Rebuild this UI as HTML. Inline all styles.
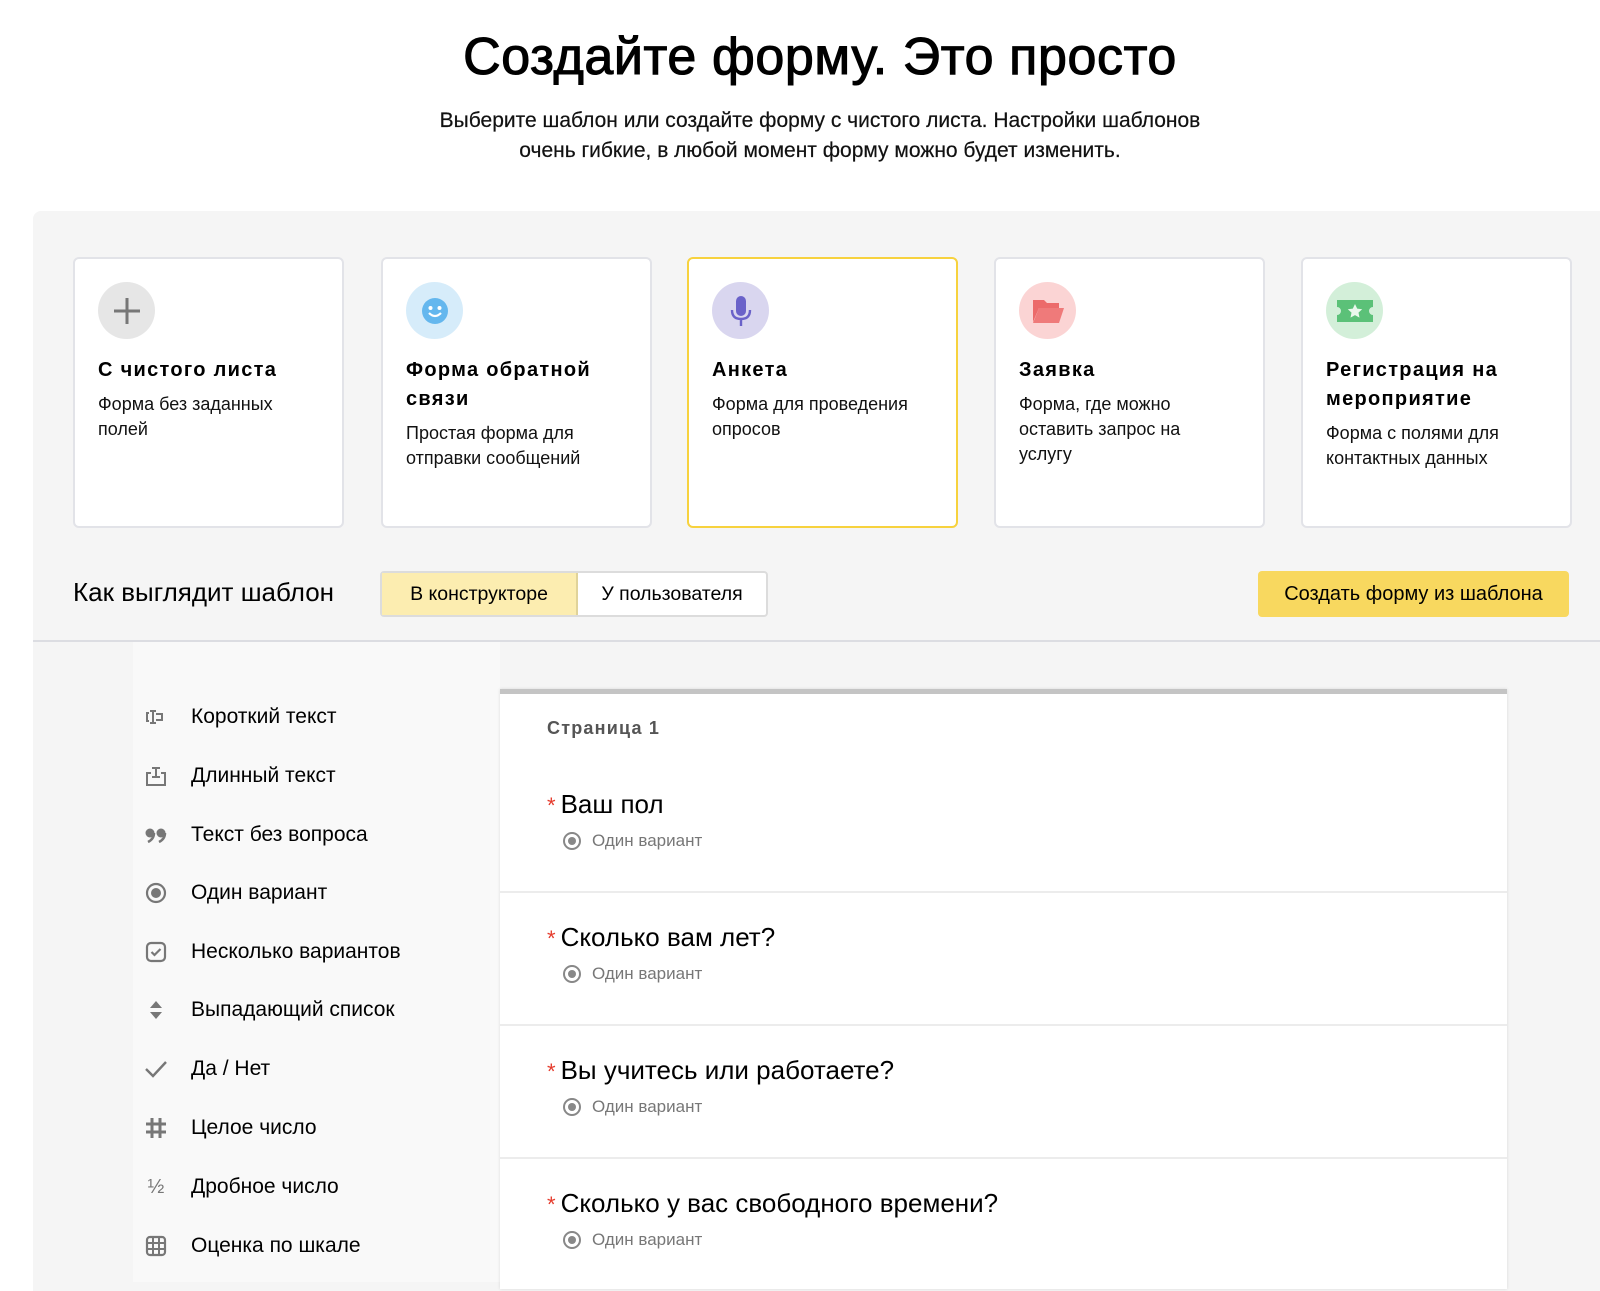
<!DOCTYPE html>
<html><head><meta charset="utf-8">
<style>
*{box-sizing:border-box;margin:0;padding:0}
body{width:1600px;height:1279px;overflow:hidden;background:#fff;font-family:"Liberation Sans","Noto Sans CJK SC",sans-serif;color:#000;position:relative}
h1{position:absolute;left:20px;width:1600px;top:27px;text-align:center;font-size:52px;font-weight:normal;letter-spacing:0.6px;-webkit-text-stroke:1.1px #000}
.sub{position:absolute;left:20px;width:1600px;top:106px;text-align:center;font-size:21px;line-height:30px;color:#111;-webkit-text-stroke:0.2px #111}
.panel{position:absolute;left:33px;top:211px;width:1580px;height:1080px;background:#f5f5f5;border-radius:8px 0 0 0}
.card{position:absolute;top:257px;width:271px;height:271px;background:#fff;border:2px solid #e2e3e8;border-radius:6px;padding:0 22px}
.card.sel{border-color:#f7d23e}
.ic{position:absolute;left:23px;top:23px;width:57px;height:57px;border-radius:50%;display:flex;align-items:center;justify-content:center}
.card .t{position:absolute;left:23px;right:22px;top:97px;font-size:20px;font-weight:bold;line-height:29px;letter-spacing:1.3px}
.card .d{font-size:18px;line-height:25px;color:#111;margin-top:7px;letter-spacing:0;font-weight:normal;padding-right:14px}
.tb{position:absolute;top:577px;left:73px;font-size:26px}
.tog{position:absolute;top:571px;left:380px;height:46px;width:388px;border:2px solid #dcdcdc;border-radius:4px;background:#fff;display:flex;font-size:19.5px}
.tog div{display:flex;align-items:center;justify-content:center}
.btn{position:absolute;top:571px;left:1258px;width:311px;height:46px;background:#f8d85f;border-radius:4px;font-size:20px;display:flex;align-items:center;justify-content:center}
.div{position:absolute;left:33px;top:640px;width:1567px;height:2px;background:#dcdde2}
.side{position:absolute;left:133px;top:642px;width:367px;height:640px;background:#f9f9f9}
.it{position:absolute;left:191px;font-size:21px;transform:translateY(-50%)}
.si{position:absolute;left:143px;width:26px;height:26px;transform:translateY(-50%);display:flex;align-items:center;justify-content:center;color:#777}
.form{position:absolute;left:500px;top:689px;width:1007px;height:600px;background:#fff;border-top:5px solid #c4c4c4;box-shadow:0 0 3px rgba(0,0,0,.12)}
.pg{position:absolute;left:47px;top:24px;font-size:18px;font-weight:bold;color:#555;letter-spacing:1.2px}
.q{position:absolute;left:47px;font-size:26px}
.q b{color:#e53b2c;font-weight:normal;margin-right:5px;font-size:22px}
.r{position:absolute;left:63px;font-size:17px;color:#777;display:flex;align-items:center}
.r i{width:18px;height:18px;border:2px solid #888;border-radius:50%;display:inline-block;margin-right:11px;position:relative}
.r i:after{content:"";position:absolute;left:3px;top:3px;width:8px;height:8px;border-radius:50%;background:#888}
.hl{position:absolute;left:0;width:1007px;height:2px;background:#ececec}
</style></head><body>
<h1>Создайте форму. Это просто</h1>
<div class="sub">Выберите шаблон или создайте форму с чистого листа. Настройки шаблонов<br>очень гибкие, в любой момент форму можно будет изменить.</div>
<div class="panel"></div>

<div class="card" style="left:73px"><div class="ic" style="background:#e6e6e6"><svg width="30" height="30"><path d="M15 2v26M2 15h26" stroke="#777" stroke-width="3"/></svg></div><div class="t">С чистого листа<div class="d">Форма без заданных полей</div></div></div>
<div class="card" style="left:381px"><div class="ic" style="background:#d6ecfa"><svg width="30" height="30"><circle cx="15" cy="15" r="13" fill="#64b7ee"/><circle cx="10.5" cy="12" r="2" fill="#fff"/><circle cx="19.5" cy="12" r="2" fill="#fff"/><path d="M9 17q6 6 12 0" stroke="#fff" stroke-width="2.2" fill="none"/></svg></div><div class="t">Форма обратной связи<div class="d">Простая форма для отправки сообщений</div></div></div>
<div class="card sel" style="left:687px"><div class="ic" style="background:#d9d6ef"><svg width="30" height="34"><rect x="10" y="2" width="10" height="20" rx="5" fill="#6a62c9"/><path d="M6 16q0 9 9 9t9-9M15 25v7" stroke="#6a62c9" stroke-width="2.4" fill="none"/></svg></div><div class="t">Анкета<div class="d">Форма для проведения опросов</div></div></div>
<div class="card" style="left:994px"><div class="ic" style="background:#fbd4d4"><svg width="34" height="28"><path d="M2 3h11l3 3h12v5H8L2 25z" fill="#ec6a6a"/><path d="M8 11h25l-5 15H2z" fill="#ef7a7a"/></svg></div><div class="t">Заявка<div class="d">Форма, где можно оставить запрос на услугу</div></div></div>
<div class="card" style="left:1301px"><div class="ic" style="background:#d3efd9"><svg width="38" height="24"><path d="M1 1h36v7a4 4 0 0 0 0 8v7H1v-7a4 4 0 0 0 0-8z" fill="#5bc178"/><path d="M19 5l2.2 4.6 5 .6-3.7 3.4 1 5-4.5-2.5-4.5 2.5 1-5-3.7-3.4 5-.6z" fill="#e9f8ec"/></svg></div><div class="t">Регистрация на мероприятие<div class="d">Форма с полями для контактных данных</div></div></div>

<div class="tb">Как выглядит шаблон</div>
<div class="tog"><div style="width:196px;background:#fcedb0;border-right:2px solid #e0d39a">В конструкторе</div><div style="flex:1">У пользователя</div></div>
<div class="btn">Создать форму из шаблона</div>
<div class="div"></div>
<div class="side"></div>

<div class="si" style="top:717px"><svg width="24" height="16"><path d="M5 4h-2v8h2M9 2v12M6 2h6M6 14h6M12 5h6v6h-6" stroke="#777" stroke-width="2" fill="none"/></svg></div><div class="it" style="top:717px">Короткий текст</div>
<div class="si" style="top:776px"><svg width="22" height="22"><path d="M6 8H2v12h18V8h-4M11 2v10M7 3h8M7 12h8" stroke="#777" stroke-width="2" fill="none"/></svg></div><div class="it" style="top:776px">Длинный текст</div>
<div class="si" style="top:835px"><svg width="24" height="16"><circle cx="6" cy="6" r="4.5" fill="#777"/><path d="M10 6q0 6-6 9" stroke="#777" stroke-width="2.5" fill="none"/><circle cx="17" cy="6" r="4.5" fill="#777"/><path d="M21 6q0 6-6 9" stroke="#777" stroke-width="2.5" fill="none"/></svg></div><div class="it" style="top:835px">Текст без вопроса</div>
<div class="si" style="top:893px"><svg width="22" height="22"><circle cx="11" cy="11" r="9" stroke="#777" stroke-width="2.2" fill="none"/><circle cx="11" cy="11" r="5" fill="#777"/></svg></div><div class="it" style="top:893px">Один вариант</div>
<div class="si" style="top:952px"><svg width="22" height="22"><rect x="2" y="2" width="18" height="18" rx="4" stroke="#777" stroke-width="2.2" fill="none"/><path d="M6.5 11l3 3 6-6" stroke="#777" stroke-width="2.2" fill="none"/></svg></div><div class="it" style="top:952px">Несколько вариантов</div>
<div class="si" style="top:1010px"><svg width="16" height="22"><path d="M2 9l6-7 6 7zM2 13l6 7 6-7z" fill="#777"/></svg></div><div class="it" style="top:1010px">Выпадающий список</div>
<div class="si" style="top:1069px"><svg width="24" height="18"><path d="M2 9l7 7L22 2" stroke="#777" stroke-width="2.4" fill="none"/></svg></div><div class="it" style="top:1069px">Да / Нет</div>
<div class="si" style="top:1128px"><svg width="22" height="22"><path d="M7 1v20M15 1v20M1 7h20M1 15h20" stroke="#777" stroke-width="3"/></svg></div><div class="it" style="top:1128px">Целое число</div>
<div class="si" style="top:1187px;font-size:20px;color:#777">½</div><div class="it" style="top:1187px">Дробное число</div>
<div class="si" style="top:1246px"><svg width="22" height="22"><rect x="2" y="2" width="18" height="18" rx="3" stroke="#777" stroke-width="2.2" fill="none"/><path d="M8 2v18M14 2v18M2 8h18M2 14h18" stroke="#777" stroke-width="2"/></svg></div><div class="it" style="top:1246px">Оценка по шкале</div>

<div class="form">
<div class="pg">Страница 1</div>
<div class="q" style="top:95px"><b>*</b>Ваш пол</div>
<div class="r" style="top:137px"><i></i>Один вариант</div>
<div class="hl" style="top:197px"></div>
<div class="q" style="top:228px"><b>*</b>Сколько вам лет?</div>
<div class="r" style="top:270px"><i></i>Один вариант</div>
<div class="hl" style="top:330px"></div>
<div class="q" style="top:361px"><b>*</b>Вы учитесь или работаете?</div>
<div class="r" style="top:403px"><i></i>Один вариант</div>
<div class="hl" style="top:463px"></div>
<div class="q" style="top:494px"><b>*</b>Сколько у вас свободного времени?</div>
<div class="r" style="top:536px"><i></i>Один вариант</div>
</div>
</body></html>
